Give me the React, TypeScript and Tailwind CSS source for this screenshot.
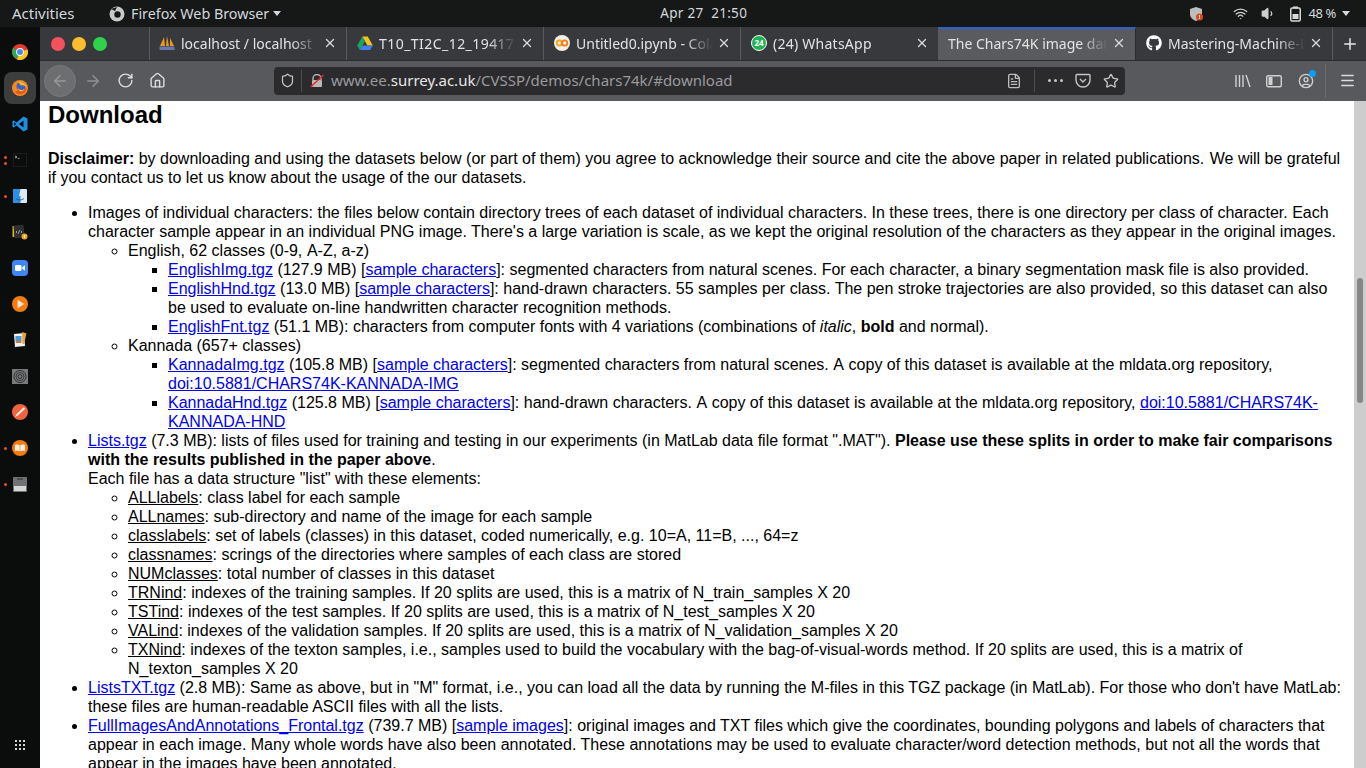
import {
  ArrowLeft,
  ArrowRight,
  RotateCw,
  Home,
  Shield,
  FileText,
  Star,
  CircleUser,
  Menu,
  Plus,
  X,
  Wifi,
  Volume1,
} from 'lucide-react';
import { FaGithub } from 'react-icons/fa';
import type { ReactNode } from 'react';

function A({ children }: { children: ReactNode }) {
  return <a className="text-[#0000ee] underline">{children}</a>;
}

function U({ children }: { children: ReactNode }) {
  return <span className="underline">{children}</span>;
}

function Sp({ children }: { children: ReactNode }) {
  return <span className="[word-spacing:1px]">{children}</span>;
}

/* ---------- dock icons ---------- */
function ChromeIcon() {
  return (
    <svg width="16" height="16" viewBox="0 0 16 16">
      <circle cx="8" cy="8" r="8" fill="#e33b2e" />
      <path d="M8 8 L1.1 4 A8 8 0 0 0 5 15.4 Z" fill="#2fa84f" />
      <path d="M8 8 L15.6 5.5 A8 8 0 0 1 5 15.4 Z" fill="#f9c81e" />
      <circle cx="8" cy="8" r="3.9" fill="#fff" />
      <circle cx="8" cy="8" r="3" fill="#4a8af4" />
    </svg>
  );
}

function FirefoxIcon({ size = 16 }: { size?: number }) {
  return (
    <svg width={size} height={size} viewBox="0 0 16 16">
      <circle cx="8" cy="8" r="8" fill="#f58a1f" />
      <path d="M3 12 A6.5 6.5 0 0 0 14.5 8 L8 9 Z" fill="#e8581c" />
      <circle cx="9" cy="6.5" r="4.6" fill="#3f5fc8" />
      <path d="M6 2 C10 1 14 3 14.5 8 C13 5.5 11 5 9 5.5 C8 4.5 7 3 6 2Z" fill="#f9b62b" />
      <path d="M5.5 7 C6.5 10.5 10.5 11 12.5 8.5 C12 12 6 13 5.5 7Z" fill="#fbc83a" />
    </svg>
  );
}

function VsCodeIcon() {
  return (
    <svg width="16" height="16" viewBox="0 0 16 16">
      <path d="M11.5 0.5 L15.5 2.4 V13.6 L11.5 15.5 L4.5 9.4 L1.8 11.5 L0.5 10.8 V5.2 L1.8 4.5 L4.5 6.6 Z M11.5 4.6 L7 8 L11.5 11.4 Z M2.2 6 V10 L4.2 8 Z" fill="#1e8fe0" />
    </svg>
  );
}

function TerminalIcon() {
  return (
    <svg width="14" height="14" viewBox="0 0 14 14">
      <rect x="0.25" y="0.25" width="13.5" height="13.5" rx="1" fill="#0c0c0c" stroke="#3a3a3a" strokeWidth="0.5" />
      <path d="M2 3 L4 4 L2 5" stroke="#ccc" strokeWidth="0.8" fill="none" />
      <path d="M4.5 5.5 H6.5" stroke="#aaa" strokeWidth="0.8" />
    </svg>
  );
}

function FinderIcon() {
  return (
    <svg width="14" height="14" viewBox="0 0 14 14">
      <rect width="14" height="14" rx="1" fill="#dfe7f0" />
      <path d="M0 1 a1 1 0 0 1 1 -1 H7.5 L6 7 H7.5 V14 H1 a1 1 0 0 1 -1 -1Z" fill="#2b8fe6" />
      <path d="M3 9.5 C5 11.5 9 11.5 11 9.5" stroke="#1c4f85" strokeWidth="0.8" fill="none" />
    </svg>
  );
}

function CodeFileIcon() {
  return (
    <svg width="16" height="16" viewBox="0 0 16 16">
      <rect x="0.5" y="2" width="2" height="11" fill="#d8b62a" />
      <rect x="2" y="1" width="10" height="13" rx="0.5" fill="#2f2f2f" transform="rotate(-5 7 7)" />
      <path d="M5 7 L4 8 L5 9 M9 7 L10 8 L9 9 M8 6 L6 10" stroke="#ddd" strokeWidth="0.6" fill="none" />
      <circle cx="12.5" cy="12.5" r="3" fill="#f5a623" />
      <rect x="12" y="11" width="1" height="3" fill="#fff" />
    </svg>
  );
}

function ZoomIcon() {
  return (
    <svg width="16" height="16" viewBox="0 0 16 16">
      <rect width="16" height="16" rx="4" fill="#3f86f5" />
      <rect x="3" y="5" width="6.5" height="6" rx="1.2" fill="#fff" />
      <path d="M10.3 7.3 L13 5.3 V10.7 L10.3 8.7 Z" fill="#fff" />
    </svg>
  );
}

function PlayIcon() {
  return (
    <svg width="16" height="16" viewBox="0 0 16 16">
      <circle cx="8" cy="8" r="8" fill="#f47c0f" />
      <path d="M5.5 3.8 L12.5 8 L5.5 12.2 Z" fill="#f7e3cc" />
    </svg>
  );
}

function PagesIcon() {
  return (
    <svg width="14" height="16" viewBox="0 0 14 16">
      <path d="M1 2 L11 1 L12 14 L2 15 Z" fill="#f2f2ee" />
      <rect x="2.5" y="4" width="6" height="5" fill="#4a9ad6" />
      <path d="M2.5 9 H8.5 L8.5 11 H3Z" fill="#d6773a" />
      <path d="M9 0 L13.5 1.5 L11 12 L9.5 12 Z" fill="#e9a23a" />
    </svg>
  );
}

function SettingsIcon() {
  return (
    <svg width="16" height="15" viewBox="0 0 16 15">
      <rect width="16" height="15" fill="#77797b" />
      <circle cx="8" cy="7.5" r="6" fill="none" stroke="#2e2f30" strokeWidth="1" />
      <circle cx="8" cy="7.5" r="4" fill="none" stroke="#3a3b3c" strokeWidth="1" />
      <circle cx="8" cy="7.5" r="2" fill="none" stroke="#2e2f30" strokeWidth="1" />
    </svg>
  );
}

function PencilIcon() {
  return (
    <svg width="16" height="16" viewBox="0 0 16 16">
      <circle cx="8" cy="8" r="8" fill="#f0653f" />
      <path d="M5.5 10.5 L12.5 4" stroke="#fdeee8" strokeWidth="2" />
      <path d="M3 13 L5 9.5 L6.5 11 Z" fill="#fdeee8" />
    </svg>
  );
}

function BookIcon() {
  return (
    <svg width="16" height="16" viewBox="0 0 16 16">
      <circle cx="8" cy="8" r="8" fill="#f47c0f" />
      <path d="M3 5 C5 4.3 7 4.5 7.7 5.3 V11.5 C7 10.8 5 10.6 3 11.2 Z M13 5 C11 4.3 9 4.5 8.3 5.3 V11.5 C9 10.8 11 10.6 13 11.2 Z" fill="#fbeee0" />
    </svg>
  );
}

function DriveDiskIcon() {
  return (
    <svg width="14" height="15" viewBox="0 0 14 15">
      <rect width="14" height="15" rx="1" fill="#6f7173" />
      <rect x="1" y="9" width="12" height="5" fill="#d5d6d6" />
      <rect x="4" y="1.5" width="6" height="1" fill="#2d2d2d" />
    </svg>
  );
}

function Dock() {
  const icons = [
    { key: 'chrome', icon: <ChromeIcon />, dots: 0 },
    { key: 'firefox', icon: <FirefoxIcon />, dots: 1, active: true },
    { key: 'vscode', icon: <VsCodeIcon />, dots: 0 },
    { key: 'terminal', icon: <TerminalIcon />, dots: 2 },
    { key: 'finder', icon: <FinderIcon />, dots: 1 },
    { key: 'code', icon: <CodeFileIcon />, dots: 0 },
    { key: 'zoom', icon: <ZoomIcon />, dots: 0 },
    { key: 'play', icon: <PlayIcon />, dots: 0 },
    { key: 'pages', icon: <PagesIcon />, dots: 0 },
    { key: 'settings', icon: <SettingsIcon />, dots: 0 },
    { key: 'pencil', icon: <PencilIcon />, dots: 0 },
    { key: 'book', icon: <BookIcon />, dots: 1 },
    { key: 'disk', icon: <DriveDiskIcon />, dots: 1 },
  ];
  return (
    <div className="w-10 shrink-0 bg-[#0b0d0d] flex flex-col pt-[7px]">
      {icons.map((item) => (
        <div key={item.key} className="h-9 flex items-center">
          <div className="w-1 ml-[3px] flex flex-col items-center gap-[3px]">
            {Array.from({ length: item.dots }).map((_, i) => (
              <span key={i} className="w-[3px] h-[3px] rounded-full bg-[#e9541f]" />
            ))}
          </div>
          <div
            className={`-ml-[3px] w-8 h-8 rounded-lg flex items-center justify-center ${
              item.active ? 'bg-[#3c3d3d]' : ''
            }`}
          >
            {item.icon}
          </div>
        </div>
      ))}
      <div className="mt-auto h-[46px] flex items-center justify-center">
        <div className="grid grid-cols-3 gap-[2px]">
          {Array.from({ length: 9 }).map((_, i) => (
            <span key={i} className="w-[2px] h-[2px] bg-[#d5d5d5]" />
          ))}
        </div>
      </div>
    </div>
  );
}

/* ---------- top bar ---------- */
function TopBar() {
  return (
    <div className="h-[27px] shrink-0 bg-[#161717] flex items-center text-[#d3d8dc] font-['Noto_Sans',sans-serif]">
      <span className="ml-3 w-[96px] text-[15px]">Activities</span>
      <svg width="16" height="16" viewBox="0 0 16 16" className="ml-[1px]">
        <circle cx="8" cy="8" r="7.5" fill="#c9c9c9" />
        <circle cx="8.5" cy="8.5" r="3.2" fill="#161717" />
        <path d="M2 3 L8 1 L6 5 Z" fill="#161717" />
      </svg>
      <span className="ml-[6px] text-[14.3px]">Firefox Web Browser</span>
      <span className="ml-[4px] w-0 h-0 border-x-[4px] border-x-transparent border-t-[5px] border-t-[#d3d8dc]" />
      <span className="ml-[379px] text-[13.5px] tracking-[0.3px]">Apr 27&nbsp; 21:50</span>
      <div className="ml-auto flex items-center">
        <svg width="14" height="16" viewBox="0 0 14 16">
          <path d="M7 1 L13 3 V8 C13 11.5 10 14 7 15 C4 14 1 11.5 1 8 V3 Z" fill="#bdbdbd" />
          <circle cx="10.5" cy="11" r="3.5" fill="#e0491c" />
          <rect x="10" y="9" width="1" height="2.5" fill="#fff" />
          <rect x="10" y="12" width="1" height="1" fill="#fff" />
        </svg>
        <Wifi size={15} className="ml-[30px] text-[#cfcfcf]" />
        <Volume1 size={15} className="ml-[13px] text-[#cfcfcf] fill-[#cfcfcf]" />
        <svg width="11" height="16" viewBox="0 0 11 16" className="ml-[14px]">
          <rect x="0.75" y="2" width="9.5" height="13" rx="1.5" fill="none" stroke="#d8d8d8" strokeWidth="1.5" />
          <rect x="3" y="0.5" width="5" height="2" fill="#d8d8d8" />
          <rect x="2.5" y="8" width="6" height="5" fill="#d8d8d8" />
        </svg>
        <span className="ml-[8px] text-[13px] tracking-[-0.4px]">48 %</span>
        <span className="ml-[6px] mr-[16px] w-0 h-0 border-x-[4px] border-x-transparent border-t-[5px] border-t-[#d3d8dc]" />
      </div>
    </div>
  );
}

/* ---------- browser tabs ---------- */
function Tab({
  width,
  pad = 'pl-[10px]',
  icon,
  title,
  titleClass = '',
  active,
}: {
  width: string;
  pad?: string;
  icon?: ReactNode;
  title: string;
  titleClass?: string;
  active?: boolean;
}) {
  return (
    <div
      className={`${width} ${pad} shrink-0 h-full flex items-center pr-[9px] ${
        active
          ? 'bg-[#5a5b5e] border-t-2 border-t-[#2a62d6] border-r border-r-[#2a2b2e] pb-[3px]'
          : 'border-r border-r-[#5a5b5e] pb-px'
      }`}
    >
      {icon && <span className="w-4 h-4 mr-[6px] shrink-0 flex items-center justify-center">{icon}</span>}
      <span
        className={`flex-1 overflow-hidden whitespace-nowrap text-[14px] text-[#e3e3e4] [mask-image:linear-gradient(to_left,transparent,black_28px)] ${titleClass}`}
      >
        {title}
      </span>
      <X size={14} strokeWidth={2.2} className="ml-1 shrink-0 text-[#dcdcdc]" />
    </div>
  );
}

function TabBar() {
  return (
    <div className="h-[33px] shrink-0 bg-[#38393d] flex items-stretch font-['Noto_Sans',sans-serif]">
      <div className="w-[110px] shrink-0 border-r border-r-[#5a5b5e] flex items-center gap-[7px] pl-[11px]">
        <span className="w-[14px] h-[14px] rounded-full bg-[#f5515c]" />
        <span className="w-[14px] h-[14px] rounded-full bg-[#fbbc2e]" />
        <span className="w-[14px] h-[14px] rounded-full bg-[#2fd24a]" />
      </div>
      <Tab
        width="w-[197px]"
        pad="pl-[9px]"
        title="localhost / localhost"
        icon={
          <svg width="16" height="16" viewBox="0 0 16 16">
            <path d="M1 11 L5 2 L6 11 Z M7 11 L8 1 L10 11 Z M11 11 L11 3 L15 11 Z" fill="#e99a1f" />
            <rect x="0.5" y="11.5" width="15" height="3.5" fill="#6c78a8" />
          </svg>
        }
      />
      <Tab
        width="w-[197px]"
        title="T10_TI2C_12_194172"
        titleClass="tracking-[0.45px]"
        icon={
          <svg width="16" height="15" viewBox="0 0 16 15">
            <path d="M5.3 0.5 H10.7 L15.8 9.5 H10.4 Z" fill="#f8c31d" />
            <path d="M5.3 0.5 L0.2 9.5 L2.9 14 L8 5 Z" fill="#1ea362" />
            <path d="M5.4 9.5 H15.8 L13.1 14 H2.9 Z" fill="#3f80ee" />
          </svg>
        }
      />
      <Tab
        width="w-[197px]"
        title="Untitled0.ipynb - Colab"
        icon={
          <svg width="16" height="16" viewBox="0 0 16 16">
            <circle cx="8" cy="8" r="8" fill="#f3eee6" />
            <circle cx="5.3" cy="8" r="2.6" fill="none" stroke="#f0a31c" strokeWidth="1.8" />
            <circle cx="10.7" cy="8" r="2.6" fill="none" stroke="#f57c0f" strokeWidth="1.8" />
          </svg>
        }
      />
      <Tab
        width="w-[198px]"
        title="(24) WhatsApp"
        titleClass="tracking-[0.25px]"
        icon={
          <span className="w-4 h-4 rounded-full bg-[#1fb356] border border-white text-white text-[8px] font-bold leading-[14px] text-center">
            24
          </span>
        }
      />
      <Tab width="w-[197px]" pad="pl-[9px]" title="The Chars74K image dataset" active />
      <Tab width="w-[197px]" title="Mastering-Machine-Learning" icon={<FaGithub size={16} className="text-white" />} />
      <div className="flex-1 flex items-center justify-center">
        <Plus size={18} strokeWidth={2} className="text-[#e8e8e8]" />
      </div>
    </div>
  );
}

/* ---------- toolbar ---------- */
function Toolbar() {
  return (
    <div className="h-[41px] shrink-0 bg-[#58595c] border-t border-t-[#2c2d30] pb-px flex items-center text-[#dcdcdc]">
      <div className="ml-1 w-8 h-8 rounded-full bg-[#6d6e70] border border-[#77787a] flex items-center justify-center">
        <ArrowLeft size={18} className="text-[#97989a]" />
      </div>
      <ArrowRight size={18} className="ml-[8px] text-[#8f9092]" />
      <RotateCw size={17} className="ml-[15px]" />
      <Home size={17} className="ml-[15px]" />
      <div className="ml-[108px] w-[851px] h-7 rounded bg-[#2b2b2e] flex items-center font-['Noto_Sans',sans-serif]">
        <Shield size={15} className="ml-[6px] text-[#c5c5c6]" />
        <span className="ml-[6px] w-px h-[22px] bg-[#4d4d50]" />
        <svg width="14" height="14" viewBox="0 0 14 14" className="ml-2">
          <path d="M3 6 V4.5 A4 4 0 0 1 11 4.5 V6" fill="none" stroke="#b8b8b8" strokeWidth="1.4" />
          <rect x="2" y="6" width="10" height="7" rx="1" fill="#b8b8b8" />
          <path d="M0.5 13 L13.5 1" stroke="#e9232f" strokeWidth="1.4" />
        </svg>
        <span className="ml-[7px] text-[15px] whitespace-nowrap text-[#9a9a9c]">
          www.ee.<span className="text-[#e6e6e6]">surrey.ac.uk</span>/CVSSP/demos/chars74k/#download
        </span>
        <FileText size={16} className="ml-auto text-[#bdbdbe]" />
        <span className="ml-[12px] w-px h-[22px] bg-[#4d4d50]" />
        <span className="ml-[13px] flex gap-[3px]">
          <span className="w-[3px] h-[3px] rounded-full bg-[#c5c5c6]" />
          <span className="w-[3px] h-[3px] rounded-full bg-[#c5c5c6]" />
          <span className="w-[3px] h-[3px] rounded-full bg-[#c5c5c6]" />
        </span>
        <svg width="16" height="15" viewBox="0 0 16 15" className="ml-[12px]">
          <path d="M2 1.5 H14 A1 1 0 0 1 15 2.5 V7 A7 7 0 0 1 1 7 V2.5 A1 1 0 0 1 2 1.5Z" fill="none" stroke="#c5c5c6" strokeWidth="1.4" />
          <path d="M5 6 L8 9 L11 6" fill="none" stroke="#c5c5c6" strokeWidth="1.4" />
        </svg>
        <Star size={16} className="ml-[12px] mr-[6px] text-[#c5c5c6]" />
      </div>
      <svg width="16" height="14" viewBox="0 0 16 14" className="ml-[110px]">
        <path d="M1 1 V13 M4.5 1 V13 M8 1 V13 M11 1 L15 13" stroke="#d0d0d1" strokeWidth="1.4" fill="none" />
      </svg>
      <svg width="16" height="14" viewBox="0 0 16 14" className="ml-[15px]">
        <rect x="0.7" y="1.7" width="14.6" height="11" rx="1.5" fill="none" stroke="#d0d0d1" strokeWidth="1.4" />
        <rect x="2.5" y="3" width="4" height="8" fill="#d0d0d1" />
      </svg>
      <span className="relative ml-4 flex">
        <CircleUser size={16} className="text-[#d0d0d1]" />
        <span className="absolute -top-[3px] -right-[2px] w-[7px] h-[7px] rounded-full bg-[#0a9ff5]" />
      </span>
      <span className="ml-[11px] w-px h-[34px] bg-[#6b6c6e]" />
      <Menu size={17} className="ml-[13px] text-[#dcdcdc]" />
    </div>
  );
}

/* ---------- page ---------- */
function Page() {
  return (
    <div className="flex-1 min-w-0 bg-white pl-2 pr-2 overflow-hidden text-black text-[16px] leading-[19px] font-['Liberation_Sans',Arial,sans-serif]">
      <h1 className="text-[24px] leading-[27px] font-bold">Download</h1>
      <p className="mt-[21px]">
        <b>Disclaimer:</b> by downloading and using the datasets below (or part of them) you agree to acknowledge their source and cite the above paper in related publications.<Sp> We</Sp> will be grateful if you contact us to let us know about the usage of the our datasets.
      </p>
      <ul className="mt-4 pl-10 list-disc">
        <li>
          Images of individual characters: the files below contain directory trees of each dataset of individual characters. In these trees, there is one directory per class of character. Each character sample appear in an individual PNG image. There's a large variation is scale, as we kept the original resolution of the characters as they appear in the original images.
          <ul className="pl-10 list-[circle]">
            <li>
              English, 62 classes (0-9,<Sp> A-Z,</Sp> a-z)
              <ul className="pl-10 list-[square]">
                <li>
                  <A>EnglishImg.tgz</A> (127.9 MB) [<A>sample characters</A>]: segmented characters from natural scenes. For each character, a binary segmentation mask file is also provided.
                </li>
                <li>
                  <A>EnglishHnd.tgz</A> (13.0 MB) [<A>sample characters</A>]: hand-drawn characters. 55 samples per class. The pen stroke trajectories are also provided, so this dataset can also be used to evaluate on-line handwritten character recognition methods.
                </li>
                <li>
                  <A>EnglishFnt.tgz</A> (51.1 MB): characters from computer fonts with 4 variations (combinations of <i>italic</i>, <b>bold</b> and normal).
                </li>
              </ul>
            </li>
            <li>
              Kannada (657+ classes)
              <ul className="pl-10 list-[square]">
                <li>
                  <A>KannadaImg.tgz</A> (105.8 MB) [<A>sample characters</A>]: segmented characters from natural scenes.<Sp> A copy</Sp> of this dataset is available at the mldata.org repository, <A>doi:10.5881/CHARS74K-KANNADA-IMG</A>
                </li>
                <li>
                  <A>KannadaHnd.tgz</A> (125.8 MB) [<A>sample characters</A>]: hand-drawn characters.<Sp> A copy</Sp> of this dataset is available at the mldata.org repository, <A>doi:10.5881/CHARS74K-KANNADA-HND</A>
                </li>
              </ul>
            </li>
          </ul>
        </li>
        <li>
          <A>Lists.tgz</A> (7.3 MB): lists of files used for training and testing in our experiments (in MatLab data file format ".MAT"). <b>Please use these splits in order to make fair comparisons with the results published in the paper above</b>.
          <br />
          Each file has a data structure "list" with these elements:
          <ul className="pl-10 list-[circle]">
            <li><U>ALLlabels</U>: class label for each sample</li>
            <li><U>ALLnames</U>: sub-directory and name of the image for each sample</li>
            <li><U>classlabels</U>: set of labels (classes) in this dataset, coded numerically, e.g. 10=A, 11=B, ..., 64=z</li>
            <li><U>classnames</U>: scrings of the directories where samples of each class are stored</li>
            <li><U>NUMclasses</U>: total number of classes in this dataset</li>
            <li><U>TRNind</U>: indexes of the training samples. If 20 splits are used, this is a matrix of N_train_samples X 20</li>
            <li><U>TSTind</U>: indexes of the test samples. If 20 splits are used, this is a matrix of N_test_samples X 20</li>
            <li><U>VALind</U>: indexes of the validation samples. If 20 splits are used, this is a matrix of N_validation_samples X 20</li>
            <li><U>TXNind</U>: indexes of the texton samples, i.e., samples used to build the vocabulary with the bag-of-visual-words method. If 20 splits are used, this is a matrix of N_texton_samples X 20</li>
          </ul>
        </li>
        <li>
          <A>ListsTXT.tgz</A> (2.8 MB): Same as above, but in "M" format, i.e., you can load all the data by running the M-files in this TGZ package (in MatLab). For those who don't have MatLab: these files are human-readable ASCII files with all the lists.
        </li>
        <li>
          <A>FullImagesAndAnnotations_Frontal.tgz</A> (739.7 MB) [<A>sample images</A>]: original images and TXT files which give the coordinates, bounding polygons and labels of characters that appear in each image. Many whole words have also been annotated. These annotations may be used to evaluate character/word detection methods, but not all the words that appear in the images have been annotated.
        </li>
      </ul>
    </div>
  );
}

export default function App() {
  return (
    <div className="w-[1366px] h-[768px] overflow-hidden flex flex-col bg-[#161717]">
      <TopBar />
      <div className="flex-1 min-h-0 flex">
        <Dock />
        <div className="flex-1 min-w-0 flex flex-col">
          <TabBar />
          <Toolbar />
          <div className="flex-1 min-h-0 flex">
            <Page />
            <div className="w-3 shrink-0 bg-[#cdcdcd] pt-[177px] px-[3px]">
              <div className="h-[125px] rounded-full bg-[#858787]" />
            </div>
          </div>
        </div>
      </div>
    </div>
  );
}
